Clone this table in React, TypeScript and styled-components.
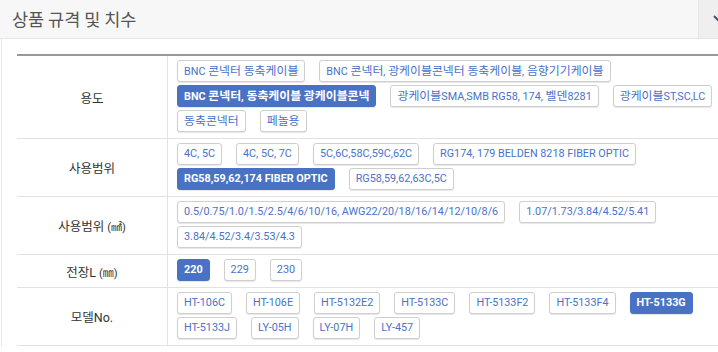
import React from 'react';
import styled, { createGlobalStyle } from 'styled-components';

const GlobalStyle = createGlobalStyle`
  html, body {
    margin: 0;
    padding: 0;
    background: #fff;
    overflow: hidden;
  }
  body {
    font-family: "Noto Sans CJK KR", "Noto Sans", sans-serif;
    color: #333;
  }
`;

const Panel = styled.div`
  width: 743px;
  margin-left: 1px;
`;

const PanelHeader = styled.div`
  display: flex;
  align-items: stretch;
  height: 38px;
  margin-left: -1px;
  background: #f7f7f7;
  border-bottom: 1px solid #e6e6e6;
`;

const Title = styled.h2`
  flex: 1;
  margin: 0;
  padding-left: 12px;
  font-size: 17.5px;
  font-weight: 400;
  line-height: 38px;
  color: #555;
`;

const ToggleBtn = styled.div`
  flex: 0 0 46px;
  display: flex;
  align-items: center;
  justify-content: flex-start;
  padding-left: 14px;
  box-sizing: border-box;
  background: #efefef;
  border-left: 1px solid #e8e8e8;
`;

const PanelBody = styled.div`
  border-left: 1px solid #e8e8e8;
  padding: 15px 0 0 15px;
`;

const SpecTable = styled.table`
  width: 100%;
  border-collapse: collapse;
  border-top: 2px solid #999;
`;

const LabelCell = styled.th`
  width: 150px;
  padding: 0;
  font-family: Roboto, "Noto Sans CJK KR", sans-serif;
  font-size: 12.5px;
  font-weight: 400;
  color: #333;
  text-align: center;
  vertical-align: middle;
  border-bottom: 1px solid #e2e2e2;
  border-right: 1px solid #e2e2e2;
`;

const Unit = styled.span`
  font-size: 11px;
`;

const OptionCell = styled.td`
  padding: 4px 9px 6px;
  border-bottom: 1px solid #e2e2e2;
`;

const OptionList = styled.div`
  display: flex;
  flex-wrap: wrap;
  column-gap: 14px;
  row-gap: 3px;
  max-width: 550px;
`;

const OptionBtn = styled.span<{ $active?: boolean }>`
  display: inline-block;
  height: 22px;
  line-height: 20px;
  padding: 0 6px;
  box-sizing: border-box;
  font-family: Roboto, "Noto Sans CJK KR", sans-serif;
  font-size: 10.8px;
  white-space: nowrap;
  border-radius: 3px;
  border: 1px solid ${(p) => (p.$active ? '#4a72c4' : '#cfcfcf')};
  background: ${(p) => (p.$active ? '#4a72c4' : '#fff')};
  color: ${(p) => (p.$active ? '#fff' : '#4a72c8')};
  font-weight: ${(p) => (p.$active ? 700 : 400)};
  box-shadow: 0 1px 1px rgba(0, 0, 0, 0.1);
`;

// hangul runs sit a touch larger than the latin text around them
const Hangul = styled.span`
  font-size: 11.9px;
`;

type Option = { label: string; active?: boolean };
type SpecRow = { title: React.ReactNode; options: Option[] };

const rows: SpecRow[] = [
  {
    title: '용도',
    options: [
      { label: 'BNC 콘넥터 동축케이블' },
      { label: 'BNC 콘넥터, 광케이블콘넥터 동축케이블, 음향기기케이블' },
      { label: 'BNC 콘넥터, 동축케이블 광케이블콘넥', active: true },
      { label: '광케이블SMA,SMB RG58, 174, 벨덴8281' },
      { label: '광케이블ST,SC,LC' },
      { label: '동축콘넥터' },
      { label: '페놀용' },
    ],
  },
  {
    title: '사용범위',
    options: [
      { label: '4C, 5C' },
      { label: '4C, 5C, 7C' },
      { label: '5C,6C,58C,59C,62C' },
      { label: 'RG174, 179 BELDEN 8218 FIBER OPTIC' },
      { label: 'RG58,59,62,174 FIBER OPTIC', active: true },
      { label: 'RG58,59,62,63C,5C' },
    ],
  },
  {
    title: (
      <>
        사용범위 <Unit>(㎟)</Unit>
      </>
    ),
    options: [
      { label: '0.5/0.75/1.0/1.5/2.5/4/6/10/16, AWG22/20/18/16/14/12/10/8/6' },
      { label: '1.07/1.73/3.84/4.52/5.41' },
      { label: '3.84/4.52/3.4/3.53/4.3' },
    ],
  },
  {
    title: (
      <>
        전장L <Unit>(㎜)</Unit>
      </>
    ),
    options: [{ label: '220', active: true }, { label: '229' }, { label: '230' }],
  },
  {
    title: '모델No.',
    options: [
      { label: 'HT-106C' },
      { label: 'HT-106E' },
      { label: 'HT-5132E2' },
      { label: 'HT-5133C' },
      { label: 'HT-5133F2' },
      { label: 'HT-5133F4' },
      { label: 'HT-5133G', active: true },
      { label: 'HT-5133J' },
      { label: 'LY-05H' },
      { label: 'LY-07H' },
      { label: 'LY-457' },
    ],
  },
];

const splitHangul = (text: string) =>
  text.split(/([\uAC00-\uD7A3]+)/).map((part, i) =>
    /[\uAC00-\uD7A3]/.test(part) ? <Hangul key={i}>{part}</Hangul> : part
  );

const App = () => {
  return (
    <>
      <GlobalStyle />
      <Panel>
        <PanelHeader>
          <Title>상품 규격 및 치수</Title>
          <ToggleBtn>
            <svg width="14" height="9" viewBox="0 0 14 9">
              <path d="M1 1 L7 7 L13 1" fill="none" stroke="#4a5560" strokeWidth="2" />
            </svg>
          </ToggleBtn>
        </PanelHeader>
        <PanelBody>
          <SpecTable>
            <tbody>
              {rows.map((row, i) => (
                <tr key={i}>
                  <LabelCell>{row.title}</LabelCell>
                  <OptionCell>
                    <OptionList>
                      {row.options.map((opt) => (
                        <OptionBtn key={opt.label} $active={opt.active}>
                          {splitHangul(opt.label)}
                        </OptionBtn>
                      ))}
                    </OptionList>
                  </OptionCell>
                </tr>
              ))}
            </tbody>
          </SpecTable>
        </PanelBody>
      </Panel>
    </>
  );
};

export default App;
